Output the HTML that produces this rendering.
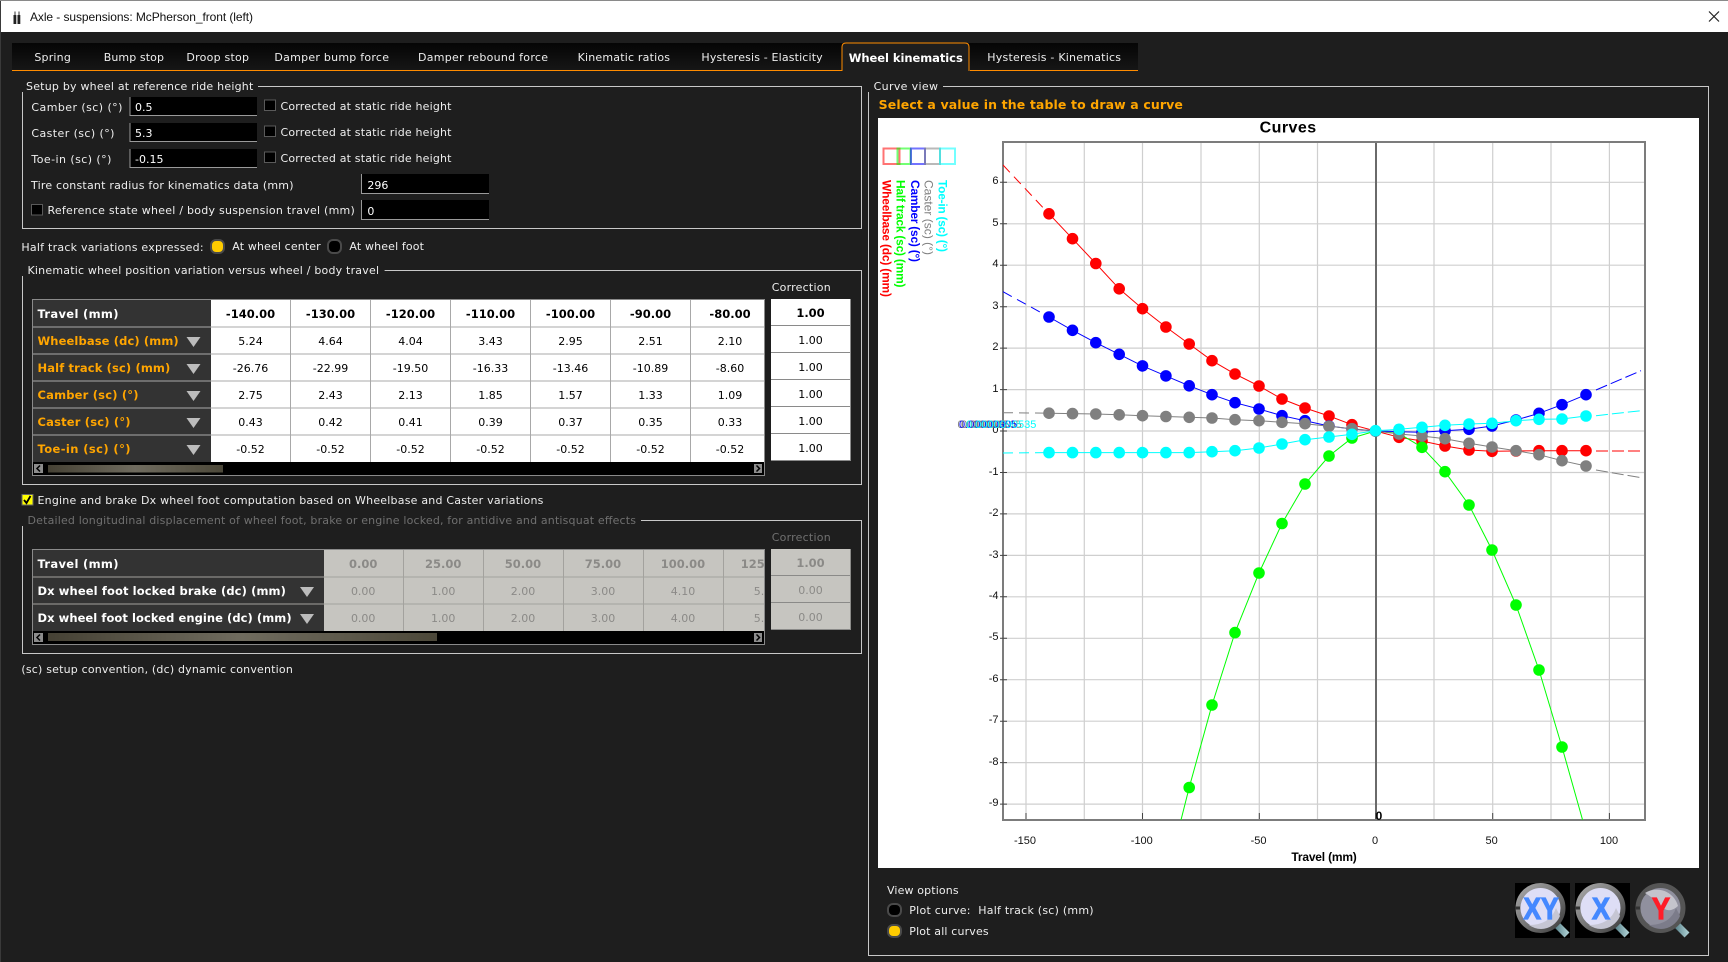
<!DOCTYPE html>
<html lang="en"><head><meta charset="utf-8"><title>Axle - suspensions: McPherson_front (left)</title>
<style>
html,body{margin:0;padding:0;background:#1e1e1e;width:1728px;height:962px;overflow:hidden}
svg{display:block}
text{font-family:"DejaVu Sans","Liberation Sans",sans-serif;font-size:11px;fill:#eee;white-space:pre}
.b{font-weight:bold}
.o{fill:#ffa500;font-weight:bold;font-size:11.5px}
.w{fill:#fff;font-weight:bold;font-size:11.5px}
.t{fill:#000;text-anchor:middle}
.h{fill:#000;text-anchor:middle;font-weight:bold;font-size:11.5px}
.g{fill:#8b8a87;text-anchor:middle}
.gh{fill:#8b8a87;text-anchor:middle;font-weight:bold;font-size:11.5px}
.d{fill:#707070}
.a{font-family:"Liberation Sans",Arial,sans-serif;fill:#111}
.yl{font-family:"Liberation Sans",Arial,sans-serif;fill:#111;text-anchor:end}
.xl{font-family:"Liberation Sans",Arial,sans-serif;fill:#111;text-anchor:middle}
.leg{font-family:"Liberation Sans",Arial,sans-serif;font-size:12px}
.ln{stroke:#c8c8c8;stroke-width:1;fill:none}
.gd{stroke:#cfcfcf;stroke-width:1.2}
.inp{fill:#000}
.cb{fill:#000;stroke:#5a5a5a;stroke-width:1}
.tk{stroke:#444;stroke-width:1}
.sep{stroke:#a8a8a8;stroke-width:1}
.sep2{stroke:#a3a29e;stroke-width:1}
</style></head><body>
<svg xmlns="http://www.w3.org/2000/svg" width="1728" height="962" viewBox="0 0 1728 962">
<defs>
<linearGradient id="th" x1="0" x2="1" y1="0" y2="0"><stop offset="0" stop-color="#454134"/><stop offset=".5" stop-color="#6f6b5e"/><stop offset="1" stop-color="#4c4839"/></linearGradient>
<linearGradient id="tab" x1="0" x2="0" y1="0" y2="1"><stop offset="0" stop-color="#050505"/><stop offset="1" stop-color="#161616"/></linearGradient>
<linearGradient id="ring" x1="0" x2="1" y1="0" y2="1"><stop offset="0" stop-color="#a8a8a8"/><stop offset=".5" stop-color="#777"/><stop offset="1" stop-color="#3c3c3c"/></linearGradient>
<linearGradient id="hdl" x1="0" x2="1" y1="0" y2="0"><stop offset="0" stop-color="#5d868e"/><stop offset="1" stop-color="#a5c8cc"/></linearGradient>
<clipPath id="plot"><rect x="1003" y="142" width="642" height="678"/></clipPath>
<clipPath id="t2"><rect x="33" y="550" width="732" height="81"/></clipPath>
<marker id="mr" markerUnits="userSpaceOnUse" markerWidth="14" markerHeight="14" refX="7" refY="7"><circle cx="7" cy="7" r="5.8" fill="#f00"/></marker>
<marker id="mg" markerUnits="userSpaceOnUse" markerWidth="14" markerHeight="14" refX="7" refY="7"><circle cx="7" cy="7" r="5.8" fill="#0f0"/></marker>
<marker id="mb" markerUnits="userSpaceOnUse" markerWidth="14" markerHeight="14" refX="7" refY="7"><circle cx="7" cy="7" r="5.8" fill="#00f"/></marker>
<marker id="my" markerUnits="userSpaceOnUse" markerWidth="14" markerHeight="14" refX="7" refY="7"><circle cx="7" cy="7" r="5.8" fill="#808080"/></marker>
<marker id="mc" markerUnits="userSpaceOnUse" markerWidth="14" markerHeight="14" refX="7" refY="7"><circle cx="7" cy="7" r="5.8" fill="#0ff"/></marker>
</defs>

<!-- window -->
<rect width="1728" height="962" fill="#1e1e1e"/>
<rect x="0" y="1" width="1728" height="31" fill="#fff"/>
<rect x="0" y="0" width="1728" height="1" fill="#8a8a8a"/>
<rect x="0" y="1" width="1" height="961" fill="#3a3a3a"/>
<g fill="#222"><rect x="13.500" y="15" width="2.800" height="9"/><rect x="17.500" y="15" width="2.800" height="9"/></g>
<g stroke="#333" stroke-width="1"><path d="M15 11.500v4M19 11.500v4"/></g>
<text x="30" y="21" style="font-family:'Liberation Sans',sans-serif;font-size:12px;fill:#111" textLength="223">Axle - suspensions: McPherson_front (left)</text>
<path d="M1709 11.500l10 10M1719 11.500l-10 10" stroke="#222" stroke-width="1.200" fill="none"/>

<!-- tabs -->
<rect x="12" y="43" width="1126" height="27" fill="url(#tab)"/>
<rect x="12" y="70" width="830" height="1" fill="#ff8c00"/>
<rect x="970" y="70" width="168" height="1" fill="#ff8c00"/>
<path d="M842 71V47q0-4 4-4H965q4 0 4 4V71" fill="#1e1e1e" stroke="#ff8c00" stroke-width="1"/>
<text x="34.400" y="61" textLength="36.400">Spring</text>
<text x="103.700" y="61" textLength="60.300">Bump stop</text>
<text x="186.400" y="61" textLength="62.600">Droop stop</text>
<text x="274.400" y="61" textLength="114.600">Damper bump force</text>
<text x="418" y="61" textLength="130">Damper rebound force</text>
<text x="577.600" y="61" textLength="92.400">Kinematic ratios</text>
<text x="701.400" y="61" textLength="121.300">Hysteresis - Elasticity</text>
<text x="848.800" y="62" class="b" style="fill:#fff;font-size:11.500px" textLength="114">Wheel kinematics</text>
<text x="987.300" y="61" textLength="133.700">Hysteresis - Kinematics</text>

<!-- group 1 -->
<text x="26" y="90" textLength="227.300">Setup by wheel at reference ride height</text>
<path class="ln" d="M258 86.500H861.500V228.500H22.500V92"/>
<text x="31.400" y="111" textLength="91">Camber (sc) (°)</text>
<text x="31.400" y="137" textLength="83">Caster (sc) (°)</text>
<text x="31.400" y="163" textLength="80">Toe-in (sc) (°)</text>
<g class="inpg">
<rect class="inp" x="129.500" y="97" width="127.500" height="19"/><path d="M130 97V115.500H257" stroke="#9a9a9a" fill="none"/>
<rect class="inp" x="129.500" y="123" width="127.500" height="19"/><path d="M130 123V141.500H257" stroke="#9a9a9a" fill="none"/>
<rect class="inp" x="129.500" y="149" width="127.500" height="19"/><path d="M130 149V167.500H257" stroke="#9a9a9a" fill="none"/>
<rect class="inp" x="361" y="174" width="128" height="20"/><path d="M361.500 174V193.500H489" stroke="#9a9a9a" fill="none"/>
<rect class="inp" x="361" y="200" width="128" height="20"/><path d="M361.500 200V219.500H489" stroke="#9a9a9a" fill="none"/>
</g>
<text x="135" y="111" style="fill:#fff">0.5</text>
<text x="135" y="137" style="fill:#fff">5.3</text>
<text x="135" y="163" style="fill:#fff">-0.15</text>
<rect class="cb" x="264.500" y="100" width="11" height="10.500"/>
<rect class="cb" x="264.500" y="126" width="11" height="10.500"/>
<rect class="cb" x="264.500" y="152" width="11" height="10.500"/>
<text x="280.500" y="110" textLength="171">Corrected at static ride height</text>
<text x="280.500" y="136" textLength="171">Corrected at static ride height</text>
<text x="280.500" y="162" textLength="171">Corrected at static ride height</text>
<text x="31" y="189" textLength="262.500">Tire constant radius for kinematics data (mm)</text>
<text x="367.400" y="189" style="fill:#fff">296</text>
<rect class="cb" x="31.500" y="204.500" width="11" height="10.500"/>
<text x="47.500" y="214" textLength="307.300">Reference state wheel / body suspension travel (mm)</text>
<text x="367.400" y="215" style="fill:#fff">0</text>

<!-- half track -->
<text x="21.400" y="251" textLength="182.200">Half track variations expressed:</text>
<rect x="211" y="240" width="13" height="13" rx="5" fill="#ffcc00" stroke="#4a4a4a" stroke-width="2"/>
<text x="232.300" y="250" textLength="88.400">At wheel center</text>
<rect x="328" y="240" width="13" height="13" rx="5" fill="#000" stroke="#4a4a4a" stroke-width="2"/>
<text x="349.400" y="250" textLength="74.600">At wheel foot</text>

<!-- group 2 -->
<text x="27.500" y="274" textLength="351.500">Kinematic wheel position variation versus wheel / body travel</text>
<path class="ln" d="M384.600 270.500H861.500V484.500H22.500V276"/>
<text x="771.700" y="291" textLength="59">Correction</text>

<rect x="33" y="300" width="178" height="162" fill="#333"/>
<rect x="211" y="300" width="554" height="162" fill="#fff"/>
<path class="sep" d="M33 327H765M33 354H765M33 381H765M33 408H765M33 435H765M290.500 300V462M370.500 300V462M450.500 300V462M530.500 300V462M610.500 300V462M690.500 300V462"/>
<rect x="33" y="462" width="732" height="13" fill="#000"/>
<rect x="32.500" y="299.500" width="732" height="176" fill="none" stroke="#8a8a8a" stroke-width="1"/>
<rect x="34" y="464" width="9" height="9" fill="#8c8c8c"/><path d="M40 465.500l-3 3 3 3" fill="none" stroke="#000" stroke-width="1.500"/>
<rect x="48" y="465" width="175" height="7.500" fill="url(#th)"/>
<rect x="754" y="464" width="8" height="9" fill="#8c8c8c"/><path d="M756.500 465.500l3 3-3 3" fill="none" stroke="#000" stroke-width="1.500"/>

<text x="37.500" y="318" class="w" textLength="81">Travel (mm)</text>
<text x="37.500" y="345" class="o" textLength="141.200">Wheelbase (dc) (mm)</text>
<text x="37.500" y="372" class="o" textLength="132.800">Half track (sc) (mm)</text>
<text x="37.500" y="399" class="o" textLength="101">Camber (sc) (°)</text>
<text x="37.500" y="426" class="o" textLength="93">Caster (sc) (°)</text>
<text x="37.500" y="453" class="o" textLength="93">Toe-in (sc) (°)</text>
<g fill="#bcbcbc">
<path d="M186.500 337h14l-7 10z"/><path d="M186.500 364h14l-7 10z"/><path d="M186.500 391h14l-7 10z"/><path d="M186.500 418h14l-7 10z"/><path d="M186.500 445h14l-7 10z"/>
</g>
<g>
<text class="h" x="250.500" y="318">-140.00</text><text class="h" x="330.500" y="318">-130.00</text><text class="h" x="410.500" y="318">-120.00</text><text class="h" x="490.500" y="318">-110.00</text><text class="h" x="570.500" y="318">-100.00</text><text class="h" x="650.500" y="318">-90.00</text><text class="h" x="730" y="318">-80.00</text>
<text class="t" x="250.500" y="345">5.24</text><text class="t" x="330.500" y="345">4.64</text><text class="t" x="410.500" y="345">4.04</text><text class="t" x="490.500" y="345">3.43</text><text class="t" x="570.500" y="345">2.95</text><text class="t" x="650.500" y="345">2.51</text><text class="t" x="730" y="345">2.10</text>
<text class="t" x="250.500" y="372">-26.76</text><text class="t" x="330.500" y="372">-22.99</text><text class="t" x="410.500" y="372">-19.50</text><text class="t" x="490.500" y="372">-16.33</text><text class="t" x="570.500" y="372">-13.46</text><text class="t" x="650.500" y="372">-10.89</text><text class="t" x="730" y="372">-8.60</text>
<text class="t" x="250.500" y="399">2.75</text><text class="t" x="330.500" y="399">2.43</text><text class="t" x="410.500" y="399">2.13</text><text class="t" x="490.500" y="399">1.85</text><text class="t" x="570.500" y="399">1.57</text><text class="t" x="650.500" y="399">1.33</text><text class="t" x="730" y="399">1.09</text>
<text class="t" x="250.500" y="426">0.43</text><text class="t" x="330.500" y="426">0.42</text><text class="t" x="410.500" y="426">0.41</text><text class="t" x="490.500" y="426">0.39</text><text class="t" x="570.500" y="426">0.37</text><text class="t" x="650.500" y="426">0.35</text><text class="t" x="730" y="426">0.33</text>
<text class="t" x="250.500" y="453">-0.52</text><text class="t" x="330.500" y="453">-0.52</text><text class="t" x="410.500" y="453">-0.52</text><text class="t" x="490.500" y="453">-0.52</text><text class="t" x="570.500" y="453">-0.52</text><text class="t" x="650.500" y="453">-0.52</text><text class="t" x="730" y="453">-0.52</text>
</g>
<rect x="771" y="299" width="80" height="162" fill="#fff"/>
<path d="M771 325.500H851M771 352.500H851M771 379.500H851M771 406.500H851M771 433.500H851M771 460.500H851M850.500 299V461" stroke="#8a8a8a" fill="none"/>
<text class="h" x="810.500" y="317">1.00</text>
<text class="t" x="810.500" y="344">1.00</text><text class="t" x="810.500" y="371">1.00</text><text class="t" x="810.500" y="398">1.00</text><text class="t" x="810.500" y="425">1.00</text><text class="t" x="810.500" y="452">1.00</text>

<!-- engine checkbox -->
<rect x="22" y="494.500" width="11" height="10.500" fill="#ffff00" stroke="#666"/>
<path d="M24 500l2.500 3 4-7" fill="none" stroke="#000" stroke-width="1.800"/>
<text x="37.500" y="504" textLength="505.900">Engine and brake Dx wheel foot computation based on Wheelbase and Caster variations</text>

<!-- group 3 -->
<text x="27.500" y="524" class="d" textLength="608.500">Detailed longitudinal displacement of wheel foot, brake or engine locked, for antidive and antisquat effects</text>
<path class="ln" d="M641 520.500H861.500V653.500H22.500V526"/>
<text x="771.700" y="541" class="d" textLength="59">Correction</text>

<rect x="33" y="550" width="291" height="81" fill="#333"/>
<rect x="324" y="550" width="441" height="81" fill="#c6c5c0"/>
<path class="sep2" d="M33 577H765M33 604H765M403.500 550V631M483.500 550V631M563.500 550V631M643.500 550V631M723.500 550V631"/>
<rect x="33" y="631" width="732" height="13" fill="#000"/>
<rect x="32.500" y="549.500" width="732" height="95" fill="none" stroke="#8a8a8a" stroke-width="1"/>
<rect x="34" y="633" width="9" height="9" fill="#8c8c8c"/><path d="M40 634.500l-3 3 3 3" fill="none" stroke="#000" stroke-width="1.500"/>
<rect x="48" y="633" width="389" height="8" fill="url(#th)"/>
<rect x="754" y="633" width="8" height="9" fill="#8c8c8c"/><path d="M756.500 634.500l3 3-3 3" fill="none" stroke="#000" stroke-width="1.500"/>
<text x="37.500" y="568" class="w" textLength="81">Travel (mm)</text>
<text x="37.500" y="595" class="w" textLength="248.400">Dx wheel foot locked brake (dc) (mm)</text>
<text x="37.500" y="622" class="w" textLength="254.100">Dx wheel foot locked engine (dc) (mm)</text>
<g fill="#bcbcbc"><path d="M300 587h14l-7 10z"/><path d="M300 614h14l-7 10z"/></g>
<g clip-path="url(#t2)">
<text class="gh" x="363.200" y="568">0.00</text><text class="gh" x="443.200" y="568">25.00</text><text class="gh" x="523" y="568">50.00</text><text class="gh" x="603" y="568">75.00</text><text class="gh" x="683" y="568">100.00</text><text class="gh" x="763" y="568">125.00</text>
<text class="g" x="363.200" y="595">0.00</text><text class="g" x="443.200" y="595">1.00</text><text class="g" x="523" y="595">2.00</text><text class="g" x="603" y="595">3.00</text><text class="g" x="683" y="595">4.10</text><text class="g" x="766" y="595">5.20</text>
<text class="g" x="363.200" y="622">0.00</text><text class="g" x="443.200" y="622">1.00</text><text class="g" x="523" y="622">2.00</text><text class="g" x="603" y="622">3.00</text><text class="g" x="683" y="622">4.00</text><text class="g" x="766" y="622">5.00</text>
</g>
<rect x="771" y="549" width="80" height="81" fill="#c6c5c0"/>
<path d="M771 575.500H851M771 602.500H851M771 629.500H851M850.500 549V630" stroke="#8a8a88" fill="none"/>
<text class="gh" x="810.500" y="567">1.00</text><text class="g" x="810.500" y="594">0.00</text><text class="g" x="810.500" y="621">0.00</text>

<text x="21.400" y="673" textLength="271.400">(sc) setup convention, (dc) dynamic convention</text>

<!-- curve view -->
<text x="873.600" y="90" textLength="64.400">Curve view</text>
<path class="ln" d="M943 86.500H1708.500V955.500H868.500V92"/>
<text x="878.600" y="109" class="o" style="font-size:12.500px" textLength="304.300">Select a value in the table to draw a curve</text>
<rect x="878" y="118" width="821" height="750" fill="#fff"/>
<text x="1259.600" y="132.500" style="font-family:'Liberation Sans',sans-serif;font-size:16px;font-weight:bold;fill:#000" textLength="56.500">Curves</text>

<!-- legend -->
<g fill="none" stroke-width="2" stroke-opacity=".55">
<rect x="883.500" y="148.500" width="16" height="15.500" stroke="#f00"/>
<rect x="897.500" y="148.500" width="13" height="15.500" stroke="#0f0"/>
<rect x="911" y="148.500" width="14" height="15.500" stroke="#00f"/>
<rect x="925" y="148.500" width="15" height="15.500" stroke="#808080"/>
<rect x="940" y="148.500" width="15" height="15.500" stroke="#0ff"/>
</g>
<g class="legg">
<text class="leg" transform="translate(882.500,180) rotate(90)" style="fill:#f00;font-weight:bold" textLength="117">Wheelbase (dc) (mm)</text>
<text class="leg" transform="translate(896.500,180) rotate(90)" style="fill:#0f0;font-weight:bold" textLength="107.500">Half track (sc) (mm)</text>
<text class="leg" transform="translate(911,180) rotate(90)" style="fill:#00f;font-weight:bold" textLength="82">Camber (sc) (°)</text>
<text class="leg" transform="translate(924.500,180) rotate(90)" style="fill:#808080" textLength="75">Caster (sc) (°)</text>
<text class="leg" transform="translate(938.500,180) rotate(90)" style="fill:#0ff;font-weight:bold" textLength="72">Toe-in (sc) (°)</text>
</g>

<!-- grid -->
<path class="gd" fill="none" d="M1026 142V820M1084.300 142V820M1142.500 142V820M1201 142V820M1259.300 142V820M1317.500 142V820M1434 142V820M1492.700 142V820M1551 142V820M1609.400 142V820"/>
<path class="gd" fill="none" d="M1003 182.300H1645M1003 223.800H1645M1003 265.200H1645M1003 306.700H1645M1003 348.100H1645M1003 389.600H1645M1003 431H1645M1003 472.500H1645M1003 513.900H1645M1003 555.400H1645M1003 596.800H1645M1003 638.300H1645M1003 679.700H1645M1003 721.200H1645M1003 762.600H1645M1003 804.100H1645"/>
<path d="M1376 142V820" stroke="#6a6a6a" stroke-width="2"/>
<rect x="1003" y="142" width="642" height="678" fill="none" stroke="#7c7c7c" stroke-width="2"/>
<path class="tk" d="M1000 182.300h7M1000 223.800h7M1000 265.200h7M1000 306.700h7M1000 348.100h7M1000 389.600h7M1000 431h7M1000 472.500h7M1000 513.900h7M1000 555.400h7M1000 596.800h7M1000 638.300h7M1000 679.700h7M1000 721.200h7M1000 762.600h7M1000 804.100h7"/>
<path class="tk" d="M1026 813v6M1142.500 813v6M1259.300 813v6M1376 813v6M1492.700 813v6M1609.400 813v6"/>

<g>
<text class="yl" x="998.500" y="184">6</text><text class="yl" x="998.500" y="226">5</text><text class="yl" x="998.500" y="267">4</text><text class="yl" x="998.500" y="309">3</text><text class="yl" x="998.500" y="350">2</text><text class="yl" x="998.500" y="392">1</text><text class="yl" x="998.500" y="433">0</text><text class="yl" x="998.500" y="475">-1</text><text class="yl" x="998.500" y="516">-2</text><text class="yl" x="998.500" y="558">-3</text><text class="yl" x="998.500" y="599">-4</text><text class="yl" x="998.500" y="640">-5</text><text class="yl" x="998.500" y="682">-6</text><text class="yl" x="998.500" y="723">-7</text><text class="yl" x="998.500" y="765">-8</text><text class="yl" x="998.500" y="806">-9</text>
<text class="xl" x="1025" y="844">-150</text><text class="xl" x="1141.800" y="844">-100</text><text class="xl" x="1258.600" y="844">-50</text><text class="xl" x="1375" y="844">0</text><text class="xl" x="1491.600" y="844">50</text><text class="xl" x="1609" y="844">100</text>
<text x="1375.600" y="820" class="a" style="font-weight:bold;fill:#000;font-size:12px">0</text>
<text x="1291.400" y="861" class="a" style="font-weight:bold;font-size:12px;fill:#000" textLength="65.400">Travel (mm)</text>
</g>

<!-- overlapping labels -->
<g>
<text x="957.500" y="428" style="font-family:'Liberation Sans',sans-serif;fill:#808080">0.000000505</text>
<text x="959" y="428" style="font-family:'Liberation Sans',sans-serif;fill:#00f">0.00000905</text>
<text x="961" y="428" style="font-family:'Liberation Sans',sans-serif;fill:#808080">0.000005</text>
<text x="966" y="428" style="font-family:'Liberation Sans',sans-serif;fill:#0ff">0.0000090535</text>
</g>

<!-- curves -->
<g clip-path="url(#plot)" fill="none" stroke-width="1">
<path stroke="#f00" stroke-dasharray="10 6" d="M1003 165L1049 214"/>
<path stroke="#f00" stroke-dasharray="12 4" d="M1596 451H1641"/>
<path stroke="#00f" stroke-dasharray="10 6" d="M1003 291.700L1049 317"/>
<path stroke="#00f" stroke-dasharray="12 4" d="M1596 390L1641 370.700"/>
<path stroke="#808080" stroke-dasharray="10 6" d="M1003 412.700L1049 413.200"/>
<path stroke="#808080" stroke-dasharray="12 4" d="M1596 470L1641 477.700"/>
<path stroke="#0ff" stroke-dasharray="10 6" d="M1003 453L1049 452.600"/>
<path stroke="#0ff" stroke-dasharray="12 4" d="M1596 415.700L1641 410.700"/>
<path stroke="#0f0" d="M1189.200 787.500L1181 820M1562 747L1582.600 820"/>
<polyline stroke="#f00" marker-start="url(#mr)" marker-mid="url(#mr)" marker-end="url(#mr)" points="1049,213.800 1072.500,238.700 1095.800,263.500 1119.200,288.800 1142.500,308.700 1165.900,327 1189.200,344 1212,360.700 1235,374 1259,386 1282,399 1305,408 1329,416 1352,424.700 1375.500,431 1399,437.300 1422,441 1445,446 1469,450 1492,451.300 1516,451 1539,450.700 1562,450.700 1586,450.700"/>
<polyline stroke="#0f0" marker-start="url(#mg)" marker-mid="url(#mg)" marker-end="url(#mg)" points="1189.200,787.500 1212,705 1235,632.600 1259,573 1282,523.500 1305,484 1329,456 1352,438 1375.500,431 1399,433.500 1422,447.300 1445,471.700 1469,505 1492,550 1516,605 1539,670 1562,747"/>
<polyline stroke="#00f" marker-start="url(#mb)" marker-mid="url(#mb)" marker-end="url(#mb)" points="1049,317 1072.500,330.300 1095.800,342.700 1119.200,354.300 1142.500,365.900 1165.900,375.900 1189.200,385.800 1212,394.700 1235,402.700 1259,409 1282,415.700 1305,420.700 1329,426 1352,429 1375.500,431 1399,431.700 1422,432.300 1445,430.700 1469,429.300 1492,426 1516,420 1539,413.300 1562,404.700 1586,394.700"/>
<polyline stroke="#808080" marker-start="url(#my)" marker-mid="url(#my)" marker-end="url(#my)" points="1049,413.200 1072.500,413.600 1095.800,414 1119.200,414.800 1142.500,415.700 1165.900,416.500 1189.200,417.300 1212,418 1235,419.700 1259,420.700 1282,422.300 1305,423.700 1329,426.300 1352,428.700 1375.500,431 1399,434 1422,436 1445,438.700 1469,443.300 1492,447 1516,450.700 1539,454.700 1562,460.700 1586,466"/>
<polyline stroke="#0ff" marker-start="url(#mc)" marker-mid="url(#mc)" marker-end="url(#mc)" points="1049,452.600 1072.500,452.600 1095.800,452.600 1119.200,452.600 1142.500,452.600 1165.900,452.600 1189.200,452.600 1212,451.700 1235,450.700 1259,448 1282,444 1305,439.700 1329,437 1352,434.300 1375.500,430.700 1399,429.300 1422,427.300 1445,425.300 1469,424 1492,423.300 1516,420.700 1539,419.300 1562,419 1586,416"/>
</g>

<!-- view options -->
<text x="887" y="894" textLength="71.600">View options</text>
<rect x="888" y="904" width="13" height="12" rx="5" fill="#000" stroke="#4a4a4a" stroke-width="2"/>
<text x="909.300" y="914" textLength="184.300">Plot curve:  Half track (sc) (mm)</text>
<rect x="888" y="925" width="13" height="12" rx="5" fill="#ffcc00" stroke="#4a4a4a" stroke-width="2"/>
<text x="909.300" y="935" textLength="79.300">Plot all curves</text>

<!-- zoom buttons -->
<rect x="1515" y="883" width="55" height="55" fill="#000"/>
<rect x="1575" y="883" width="55" height="55" fill="#000"/>
<g>
<path d="M1556 924L1567 935" stroke="url(#hdl)" stroke-width="7"/>
<circle cx="1540.500" cy="908" r="22.500" fill="#dedef6" stroke="url(#ring)" stroke-width="5"/>
<path d="M1560 916A21 21 0 0 1 1541 929A21 21 0 0 1 1529 925Q1550 925 1556 908Z" fill="#c6c6d4"/>
<rect x="1515" y="906.500" width="5" height="3" fill="#333"/>
<text x="1523.500" y="919" style="font-family:'Liberation Sans',sans-serif;font-size:31px;font-weight:bold;fill:#4488ff;stroke:#4488ff;stroke-width:1.200" textLength="35" lengthAdjust="spacingAndGlyphs">XY</text>
</g>
<g>
<path d="M1616 924L1627 935" stroke="url(#hdl)" stroke-width="7"/>
<circle cx="1600.500" cy="908" r="22.500" fill="#dedef6" stroke="url(#ring)" stroke-width="5"/>
<path d="M1620 916A21 21 0 0 1 1601 929A21 21 0 0 1 1589 925Q1610 925 1616 908Z" fill="#c6c6d4"/>
<rect x="1575" y="906.500" width="5" height="3" fill="#333"/>
<text x="1592" y="919" style="font-family:'Liberation Sans',sans-serif;font-size:31px;font-weight:bold;fill:#4488ff;stroke:#4488ff;stroke-width:1.200" textLength="18" lengthAdjust="spacingAndGlyphs">X</text>
</g>
<g>
<path d="M1676 924L1687 935" stroke="url(#hdl)" stroke-width="7"/>
<circle cx="1660.500" cy="908" r="22.500" fill="#90909e" stroke="#555" stroke-width="5"/>
<path d="M1645 893A22 22 0 0 1 1678 906Q1668 915 1660 905Q1652 897 1645 893Z" fill="#c4c4cc"/>
<path d="M1680 916A21 21 0 0 1 1661 929A21 21 0 0 1 1649 925Q1670 925 1676 908Z" fill="#7c7c8a"/>
<rect x="1635" y="906.500" width="5" height="3" fill="#333"/>
<text x="1652" y="919" style="font-family:'Liberation Sans',sans-serif;font-size:31px;font-weight:bold;fill:#ff1c28;stroke:#ff1c28;stroke-width:1.200" textLength="18" lengthAdjust="spacingAndGlyphs">Y</text>
</g>
</svg>
</body></html>
